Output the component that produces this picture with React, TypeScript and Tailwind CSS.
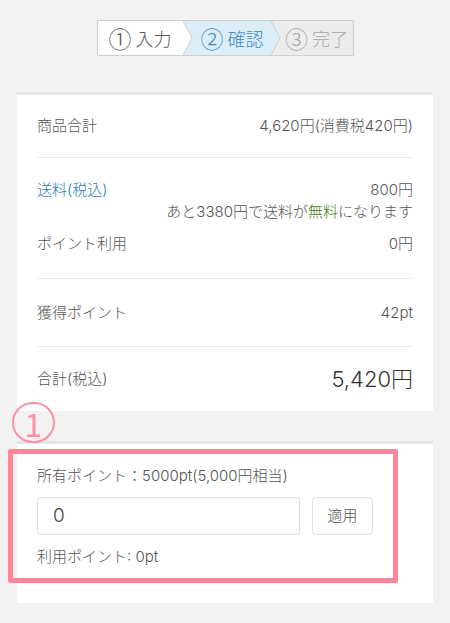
import React from "react";

const font = { fontFamily: '"Inter", "Noto Sans CJK JP", sans-serif' };
const cjk = { fontFamily: '"Noto Sans CJK JP", sans-serif' };

function Arrow({ fill, z }: { fill: string; z: string }) {
  return (
    <svg
      className={`absolute top-0 right-[-9px] ${z}`}
      width="10"
      height="34"
      viewBox="0 0 10 34"
    >
      <polygon points="0,0 9,17 0,34" fill={fill} />
      <polyline points="0,0 9,17 0,34" fill="none" stroke="#cfcfcf" strokeWidth="1" />
    </svg>
  );
}

export default function App() {
  return (
    <div
      className="relative w-[450px] min-h-[623px] bg-[#f2f2f2] text-[#555] overflow-hidden"
      style={font}
    >
      {/* Stepper */}
      <div className="flex justify-center pt-[20px] pl-[1px]" style={cjk}>
        <div className="flex h-[36px] border border-[#cfcfcf] bg-[#ececec]">
          <div className="relative flex w-[86px] items-center justify-center bg-white text-[18px] leading-none text-[#555] font-light pr-[2px]">
            <span><span className="text-[23px] align-[-2px]">①</span> 入力</span>
            <Arrow fill="#ffffff" z="z-20" />
          </div>
          <div className="relative flex w-[88px] items-center justify-center bg-[#dcedf8] text-[18px] leading-none text-[#3b8bbf] font-light pl-[8px]">
            <span><span className="text-[23px] align-[-2px]">②</span> 確認</span>
            <Arrow fill="#dcedf8" z="z-10" />
          </div>
          <div className="flex w-[81px] items-center justify-center text-[18px] leading-none text-[#a8a8a8] font-light pl-[8px]">
            <span><span className="text-[23px] align-[-2px]">③</span> 完了</span>
          </div>
        </div>
      </div>

      {/* Summary card */}
      <div className="mx-[17px] mt-[36px] bg-white border-t-[3px] border-[#e4e7ea] px-[20px] text-[15px] font-light">
        <div className="flex justify-between items-center py-[21px] leading-[20px] border-b border-[#ececec]">
          <span>商品合計</span>
          <span>4,620円(消費税420円)</span>
        </div>
        <div className="pt-[21px] pb-[23px] border-b border-[#ececec] leading-[22px]">
          <div className="flex justify-between">
            <span className="text-[#2a7ab8]">送料(税込)</span>
            <div className="text-right">
              <div>800円</div>
              <div>
                あと3380円で送料が<span className="text-[#3f7a0f]">無料</span>になります
              </div>
            </div>
          </div>
          <div className="flex justify-between mt-[10px]">
            <span>ポイント利用</span>
            <span>0円</span>
          </div>
        </div>
        <div className="flex justify-between items-center pt-[23px] pb-[22px] leading-[22px] border-b border-[#ececec]">
          <span>獲得ポイント</span>
          <span>42pt</span>
        </div>
        <div className="flex justify-between items-center pt-[17px] pb-[17px] leading-[30px]">
          <span>合計(税込)</span>
          <span className="text-[22px] text-[#333]">5,420円</span>
        </div>
      </div>

      {/* Points card */}
      <div className="mx-[17px] mt-[30px] bg-white border-t-[3px] border-[#e4e7ea] px-[20px] pt-[22px] pb-[36px] text-[15px] leading-[20px] font-light">
        <div>所有ポイント：5000pt(5,000円相当)</div>
        <div className="flex gap-[12px] mt-[11px]">
          <div className="flex items-center w-[263px] h-[38px] border border-[#dedede] rounded-[3px] pl-[15px] text-[19px] text-[#444]">
            0
          </div>
          <button className="w-[61px] h-[38px] border border-[#dedede] rounded-[4px] bg-white text-[15px] text-[#555]">
            適用
          </button>
        </div>
        <div className="mt-[12px]">利用ポイント: 0pt</div>
      </div>

      {/* Annotations */}
      <div className="absolute left-[8px] top-[449px] w-[390px] h-[134px] border-[5px] border-[#ff8599] rounded-[2px]" />
      <div className="absolute left-[12px] top-[402px] w-[43px] h-[41px] rounded-full border-[2px] border-[#ff8fa3] flex items-center justify-center">
        <span className="text-[#ff8fa3] text-[32px] leading-none font-normal mt-[1px]" style={cjk}>
          1
        </span>
      </div>
    </div>
  );
}
